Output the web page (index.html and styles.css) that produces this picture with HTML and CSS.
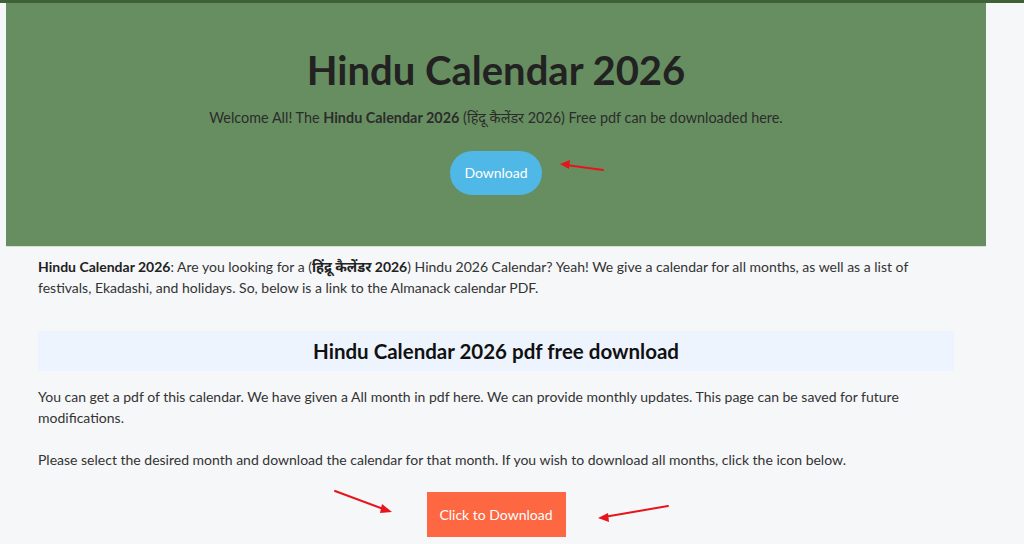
FILE: index.html
```html
<!DOCTYPE html>
<html lang="en">
<head>
    <meta charset="UTF-8">
    <meta name="viewport" content="width=device-width, initial-scale=1.0">
    <title>Hindu Calendar 2026</title>
    <link rel="stylesheet" href="styles.css">
</head>
<body>
    <div class="top-bar"></div>
    <section class="hero">
        <h1>Hindu Calendar 2026</h1>
        <p>Welcome All! The <strong>Hindu Calendar 2026</strong> (हिंदू कैलेंडर 2026) Free pdf can be downloaded here.</p>
        <a class="hero-button" href="#">Download</a>
    </section>

    <main class="content">
        <p><strong>Hindu Calendar 2026</strong>: Are you looking for a (<strong>हिंद्रू कैलेंडर 2026</strong>) Hindu 2026 Calendar? Yeah! We give a calendar for all months, as well as a list of festivals, Ekadashi, and holidays. So, below is a link to the Almanack calendar PDF.</p>

        <h2 class="section-title">Hindu Calendar 2026 pdf free download</h2>

        <p>You can get a pdf of this calendar. We have given a All month in pdf here. We can provide monthly updates. This page can be saved for future modifications.</p>
        <p>Please select the desired month and download the calendar for that month. If you wish to download all months, click the icon below.</p>

        <div class="download-row">
            <a class="download-button" href="#">Click to Download</a>
        </div>
    </main>

    <!-- red pointer arrows drawn over the screenshot -->
    <svg class="arrows" width="1024" height="544" viewBox="0 0 1024 544">
        <g stroke="#e8141b" stroke-width="2" fill="#e8141b" stroke-linecap="round">
            <line x1="603" y1="170" x2="566" y2="165"/>
            <polygon points="560,164 570,160 569,169" stroke="none"/>
            <line x1="335" y1="491" x2="386" y2="510"/>
            <polygon points="392,512 382,504 380,513" stroke="none"/>
            <line x1="668" y1="506" x2="604" y2="517"/>
            <polygon points="598,518 608,513 609,522" stroke="none"/>
        </g>
    </svg>
</body>
</html>
```

FILE: styles.css
```css
body {
    font-family: 'Lato', 'Noto Sans', 'Liberation Sans', sans-serif;
    background: #f6f7f9;
    color: #333;
    margin: 0;
    padding: 0;
    font-size: 15px;
}
.top-bar {
    height: 3px;
    background: #3e6236;
}
.hero {
    background: #678e60;
    margin: 0 38px 0 6px;
    height: 244px;
    box-sizing: border-box;
    padding-top: 43px;
    text-align: center;
    border-bottom: 1px solid #d7e0d5;
}
.hero h1 {
    margin: 0;
    font-size: 40px;
    line-height: 48px;
    color: #222;
    font-weight: bold;
}
.hero p {
    margin: 14px 0 0 0;
    font-size: 14.4px;
    line-height: 20px;
    color: #2c2c2c;
}
.hero-button {
    display: inline-block;
    margin-top: 23px;
    width: 92px;
    height: 44px;
    line-height: 44px;
    border-radius: 22px;
    background: #4fb8e6;
    color: #fff;
    text-decoration: none;
    font-size: 14px;
}
.content {
    width: 916px;
    margin: 0 0 0 38px;
    padding-top: 10px;
}
.content p {
    margin: 0 0 22px 0;
    line-height: 20.5px;
    font-size: 14px;
    color: #333;
}
.content p:first-child {
    margin-bottom: 33px;
}
.content strong {
    color: #222;
}
.section-title {
    background: #edf4fe;
    margin: 0 0 16px 0;
    height: 40px;
    line-height: 40px;
    text-align: center;
    font-size: 20.5px;
    color: #111;
}
.download-row {
    text-align: center;
    margin-top: -1px;
}
.download-button {
    display: inline-block;
    width: 139px;
    height: 45px;
    line-height: 45px;
    background: #fd6741;
    color: #fff;
    text-decoration: none;
    font-size: 14px;
}
.arrows {
    position: absolute;
    left: 0;
    top: 0;
    pointer-events: none;
}
```
